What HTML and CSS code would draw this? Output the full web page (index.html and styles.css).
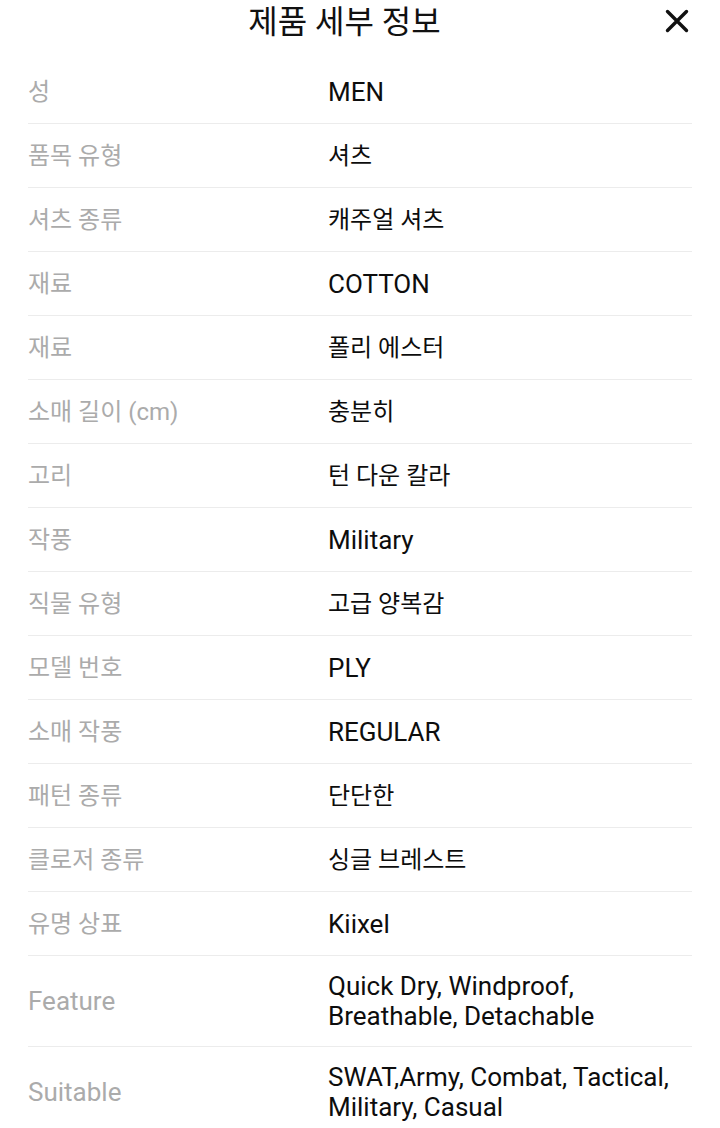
FILE: index.html
```html
<!DOCTYPE html>
<html lang="ko">
<head>
<meta charset="utf-8">
<title>제품 세부 정보</title>
<link rel="stylesheet" href="styles.css">
</head>
<body>
<div class="sheet">
  <header class="header">
    <h1 class="title">제품 세부 정보</h1>
    <button class="close" aria-label="닫기">
      <svg width="24" height="24" viewBox="0 0 24 24"><path d="M2.5 2.5 L21.5 21.5 M21.5 2.5 L2.5 21.5" stroke="#111" stroke-width="3.4" stroke-linecap="round" fill="none"/></svg>
    </button>
  </header>
  <dl class="specs">
    <div class="row"><dt class="label">성</dt><dd class="value latin">MEN</dd></div>
    <div class="row"><dt class="label">품목 유형</dt><dd class="value">셔츠</dd></div>
    <div class="row"><dt class="label">셔츠 종류</dt><dd class="value">캐주얼 셔츠</dd></div>
    <div class="row"><dt class="label">재료</dt><dd class="value latin">COTTON</dd></div>
    <div class="row"><dt class="label">재료</dt><dd class="value">폴리 에스터</dd></div>
    <div class="row"><dt class="label">소매 길이 (cm)</dt><dd class="value">충분히</dd></div>
    <div class="row"><dt class="label">고리</dt><dd class="value">턴 다운 칼라</dd></div>
    <div class="row"><dt class="label">작풍</dt><dd class="value latin">Military</dd></div>
    <div class="row"><dt class="label">직물 유형</dt><dd class="value">고급 양복감</dd></div>
    <div class="row"><dt class="label">모델 번호</dt><dd class="value latin">PLY</dd></div>
    <div class="row"><dt class="label">소매 작풍</dt><dd class="value latin">REGULAR</dd></div>
    <div class="row"><dt class="label">패턴 종류</dt><dd class="value">단단한</dd></div>
    <div class="row"><dt class="label">클로저 종류</dt><dd class="value">싱글 브레스트</dd></div>
    <div class="row"><dt class="label">유명 상표</dt><dd class="value latin">Kiixel</dd></div>
    <div class="row"><dt class="label latin">Feature</dt><dd class="value latin">Quick Dry, Windproof, Breathable, Detachable</dd></div>
    <div class="row"><dt class="label latin">Suitable</dt><dd class="value latin">SWAT,Army, Combat, Tactical, Military, Casual</dd></div>
  </dl>
</div>
</body>
</html>
```

FILE: styles.css
```css
* { box-sizing: border-box; }

html, body {
  margin: 0;
  padding: 0;
  background: #ffffff;
}

body {
  font-family: Roboto, "Noto Sans CJK KR", sans-serif;
  color: #111111;
  overflow: hidden;
}

.sheet {
  width: 720px;
}

.header {
  display: flex;
  align-items: center;
  height: 44px;
  padding: 0 31px 0 0;
}

.title {
  flex: 1;
  margin: 0;
  padding-left: 24px;
  text-align: center;
  font-size: 32px;
  font-weight: 400;
  line-height: 44px;
  color: #111111;
}

.close {
  width: 24px;
  height: 24px;
  padding: 0;
  margin: -2px 0 0 0;
  border: 0;
  background: none;
  display: flex;
  align-items: center;
  justify-content: center;
}

.specs {
  margin: 0 28px;
  padding-top: 16px;
}

.row {
  display: flex;
  align-items: center;
  min-height: 64px;
  padding: 15px 0 15px;
  border-bottom: 1px solid #ececec;
}

.row:last-child {
  border-bottom: 0;
}

.label {
  width: 300px;
  flex: none;
  margin: 0;
  font-size: 24px;
  line-height: 30px;
  color: #ababab;
}

.value {
  flex: 1;
  margin: 0;
  font-size: 24px;
  line-height: 30px;
  color: #0d0d0d;
}

.latin {
  font-size: 26px;
}
```
